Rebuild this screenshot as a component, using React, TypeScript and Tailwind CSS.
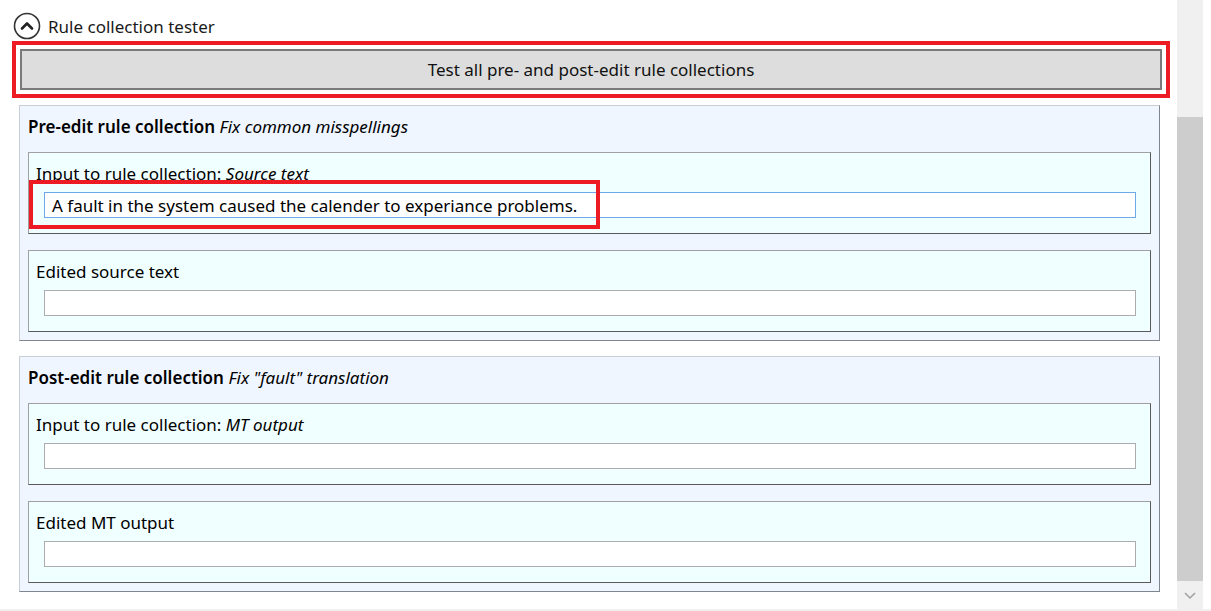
import React from "react";

const font = { fontFamily: '"Noto Sans", "Open Sans", sans-serif' };

function FieldBox({ label, italic, value, focused, marked }: { label: string; italic?: string; value?: string; focused?: boolean; marked?: boolean }) {
  return (
    <div className="relative h-[82px] border border-t-[#a0a0a0] border-l-[#a0a0a0] border-r-[#5a5a5a] border-b-[#5a5a5a] bg-[#f0ffff] pl-[7px] pr-[14px] pt-[8px]">
      <div className="h-[26px] text-[17px] leading-[26px] text-black">
        {label}
        {italic && <i>{italic}</i>}
      </div>
      <div
        className={
          "mt-[5px] ml-[8px] h-[26px] border bg-white px-[7px] pt-[2px] text-[17px] leading-[22px] text-black " +
          (focused ? "border-[#6fa8e6]" : "border-[#acacac]")
        }
      >
        {value}
      </div>
      {marked && <div className="absolute left-[0px] top-[27px] h-[49px] w-[571px] border-4 border-[#ed1c24]" />}
    </div>
  );
}

function Panel({ title, subtitle, children }: { title: string; subtitle: string; children: React.ReactNode }) {
  return (
    <div className="ml-[19px] w-[1141px] border border-t-[#c8ced4] border-l-[#c8ced4] border-r-[#80868c] border-b-[#80868c] bg-[#eff6ff] px-[8px] pb-[8px]">
      <div className="h-[46px] pt-[8px] text-[17px] leading-[26px] text-black">
        <span className="font-semibold">{title}</span> <i>{subtitle}</i>
      </div>
      <div className="flex flex-col gap-[16px]">{children}</div>
    </div>
  );
}

export default function App() {
  return (
    <div className="relative flex h-[611px] w-[1211px] overflow-hidden bg-white" style={font}>
      <div className="w-[1177px] pt-[12px]">
        <div className="flex h-[28px] items-center pl-[13px]">
          <svg width="28" height="28" viewBox="0 0 28 28">
            <circle cx="14" cy="14" r="12.5" fill="none" stroke="#333" strokeWidth="1.6" />
            <path d="M9 16.5 L14 11.5 L19 16.5" fill="none" stroke="#222" strokeWidth="2.6" strokeLinecap="round" strokeLinejoin="round" />
          </svg>
          <span className="ml-[7px] pt-[2px] text-[17px] leading-[28px] text-[#1a1a1a]">Rule collection tester</span>
        </div>
        <div className="ml-[12px] mt-[1px] h-[57px] w-[1158px] border-4 border-[#ed1c24] p-[4px]">
          <div className="flex h-full items-center justify-center border-2 border-[#7a7a7a] bg-[#dddddd] pt-[1px] text-[17px] text-[#111]">
            Test all pre- and post-edit rule collections
          </div>
        </div>
        <div className="mt-[7px]">
          <Panel title="Pre-edit rule collection" subtitle="Fix common misspellings">
            <FieldBox
              label="Input to rule collection: "
              italic="Source text"
              value="A fault in the system caused the calender to experiance problems."
              focused
              marked
            />
            <FieldBox label="Edited source text" />
          </Panel>
        </div>
        <div className="mt-[15px]">
          <Panel title="Post-edit rule collection" subtitle={'Fix "fault" translation'}>
            <FieldBox label="Input to rule collection: " italic="MT output" />
            <FieldBox label="Edited MT output" />
          </Panel>
        </div>
      </div>
      <div className="flex h-[609px] w-[26px] flex-col bg-[#f0f0f0]">
        <div className="h-[117px]" />
        <div className="h-[464px] bg-[#cdcdcd]" />
        <div className="flex h-[28px] items-center justify-center">
          <svg width="14" height="10" viewBox="0 0 14 10">
            <path d="M2 3 L7 8 L12 3" fill="none" stroke="#a0a0a0" strokeWidth="1.5" />
          </svg>
        </div>
      </div>
      <div className="absolute bottom-0 left-0 h-[2px] w-full bg-[#f0f0f0]" />
    </div>
  );
}
